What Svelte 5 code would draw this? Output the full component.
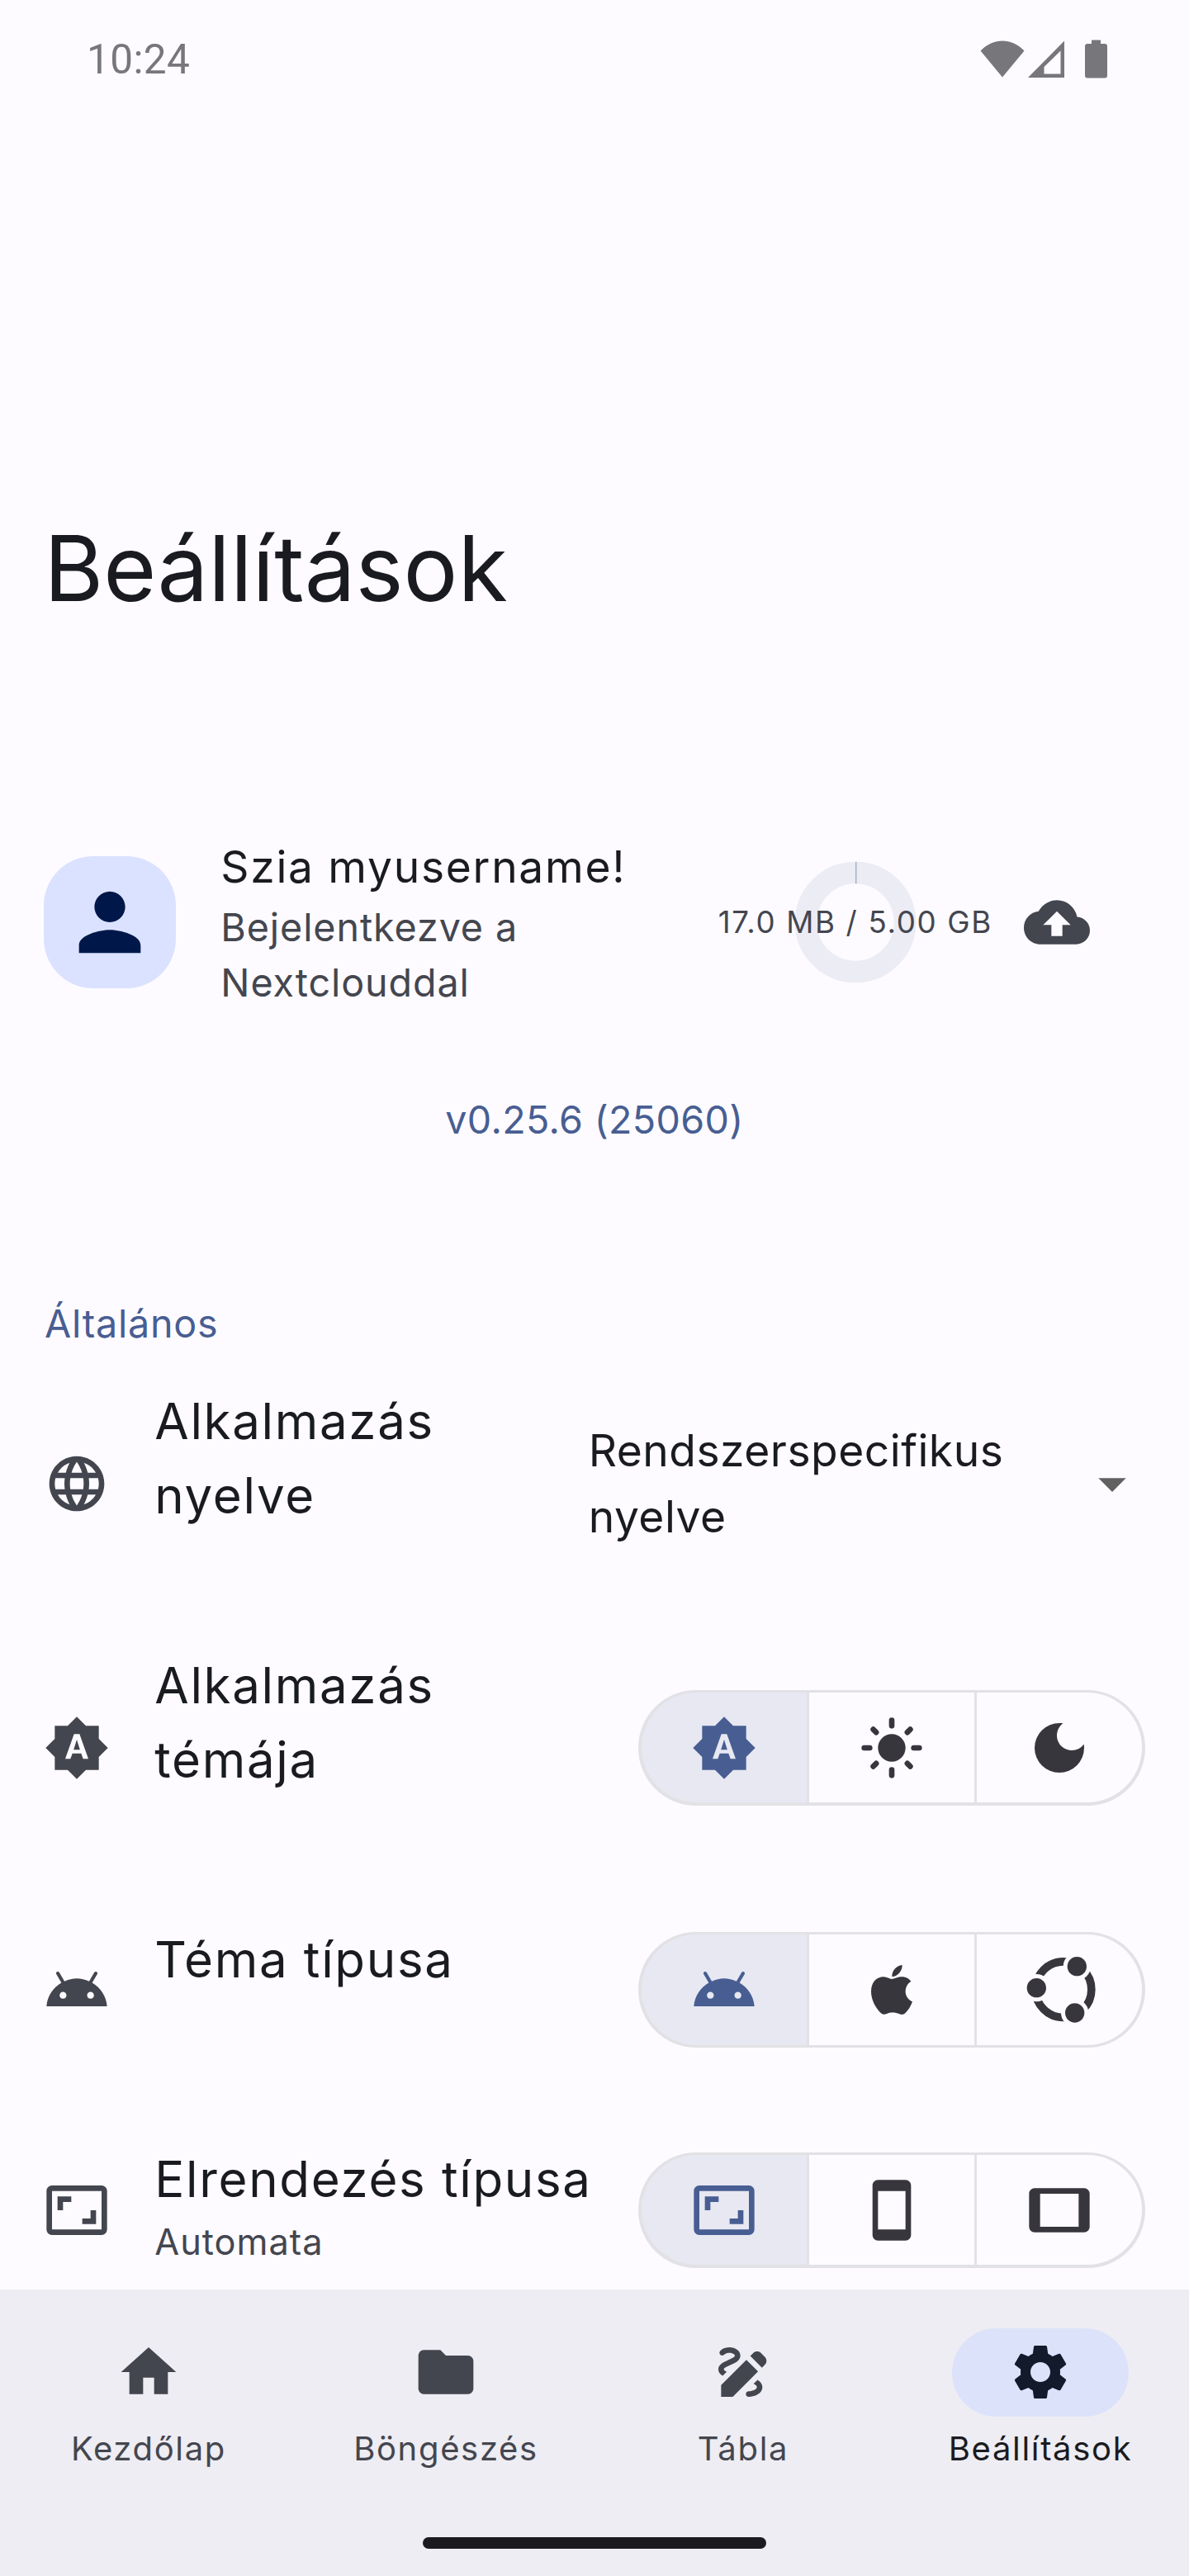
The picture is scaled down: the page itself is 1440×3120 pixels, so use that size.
<script>
  const settings = [
    {
      title: 'Alkalmazás nyelve',
      icon: 'language',
      tall: true,
      dropdown: 'Rendszerspecifikus nyelve',
    },
    {
      title: 'Alkalmazás témája',
      icon: 'autoTheme',
      tall: true,
      options: ['autoTheme', 'light', 'dark'],
    },
    { title: 'Téma típusa', icon: 'android', options: ['android', 'apple', 'ubuntu'] },
    {
      title: 'Elrendezés típusa',
      subtitle: 'Automata',
      icon: 'aspect',
      options: ['aspect', 'phone', 'tablet'],
    },
  ];

  const tabs = [
    { label: 'Kezdőlap', icon: 'home' },
    { label: 'Böngészés', icon: 'folder' },
    { label: 'Tábla', icon: 'draw' },
    { label: 'Beállítások', icon: 'gear', active: true },
  ];

  const paths = {
    person: 'M12 12c2.21 0 4-1.79 4-4s-1.79-4-4-4-4 1.79-4 4 1.79 4 4 4zm0 2c-2.67 0-8 1.34-8 4v2h16v-2c0-2.66-5.33-4-8-4z',
    cloud: 'M19.35 10.04C18.67 6.59 15.64 4 12 4 9.11 4 6.6 5.64 5.35 8.04 2.34 8.36 0 10.91 0 14c0 3.31 2.69 6 6 6h13c2.76 0 5-2.24 5-5 0-2.64-2.05-4.78-4.65-4.96zM14 13v4h-4v-4H7l5-5 5 5h-3z',
    language: 'M11.99 2C6.47 2 2 6.48 2 12s4.47 10 9.99 10C17.52 22 22 17.52 22 12S17.52 2 11.99 2zm6.93 6h-2.95c-.32-1.25-.78-2.45-1.38-3.56 1.84.63 3.37 1.91 4.33 3.56zM12 4.04c.83 1.2 1.48 2.53 1.91 3.96h-3.82c.43-1.43 1.08-2.76 1.91-3.96zM4.26 14C4.1 13.36 4 12.69 4 12s.1-1.36.26-2h3.38c-.08.66-.14 1.32-.14 2s.06 1.34.14 2H4.26zm.82 2h2.95c.32 1.25.78 2.45 1.38 3.56-1.84-.63-3.37-1.9-4.33-3.56zm2.95-8H5.08c.96-1.66 2.49-2.93 4.33-3.56C8.81 5.55 8.35 6.75 8.03 8zM12 19.96c-.83-1.2-1.48-2.53-1.91-3.96h3.82c-.43 1.43-1.08 2.76-1.91 3.96zM14.34 14H9.66c-.09-.66-.16-1.32-.16-2s.07-1.35.16-2h4.68c.09.65.16 1.32.16 2s-.07 1.34-.16 2zm.25 5.56c.6-1.11 1.06-2.31 1.38-3.56h2.95c-.96 1.65-2.49 2.93-4.33 3.56zM16.36 14c.08-.66.14-1.32.14-2s-.06-1.34-.14-2h3.38c.16.64.26 1.31.26 2s-.1 1.36-.26 2h-3.38z',
    autoTheme: 'M10.85 12.65h2.3L12 9l-1.15 3.65zM20 8.69V4h-4.69L12 .69 8.69 4H4v4.69L.69 12 4 15.31V20h4.69L12 23.31 15.31 20H20v-4.69L23.31 12 20 8.69zM14.3 16l-.7-2h-3.2l-.7 2H7.8L11 7h2l3.2 9h-1.9z',
    dark: 'M12 3a9 9 0 1 0 9 9c0-.46-.04-.92-.1-1.36a5.389 5.389 0 0 1-4.4 2.26 5.403 5.403 0 0 1-3.14-9.8C12.92 3.04 12.46 3 12 3z',
    android: 'M17.6 9.48l1.84-3.18c.16-.31.04-.69-.26-.85-.29-.15-.65-.06-.83.22l-1.88 3.24C15.04 8.28 13.55 7.9 12 7.9s-3.04.38-4.47 1.01L5.65 5.67c-.19-.29-.58-.38-.87-.2-.28.18-.37.54-.22.83L6.4 9.48C3.3 11.25 1.28 14.44 1 18h22c-.28-3.56-2.3-6.75-5.4-8.52zM7 15.25c-.69 0-1.25-.56-1.25-1.25s.56-1.25 1.25-1.25S8.25 13.31 8.25 14 7.69 15.25 7 15.25zm10 0c-.69 0-1.25-.56-1.25-1.25s.56-1.25 1.25-1.25 1.25.56 1.25 1.25-.56 1.25-1.25 1.25z',
    aspect: 'M19 12h-2v3h-3v2h5v-5zM7 9h3V7H5v5h2V9zm14-6H3c-1.1 0-2 .9-2 2v14c0 1.1.9 2 2 2h18c1.1 0 2-.9 2-2V5c0-1.1-.9-2-2-2zm0 16.01H3V4.99h18v14.02z',
    phone: 'M17 1.01L7 1c-1.1 0-1.99.9-1.99 2v18c0 1.1.89 2 1.99 2h10c1.1 0 2-.9 2-2V3c0-1.1-.9-1.99-2-1.99zM17 19H7V5h10v14z',
    tablet: 'M21 4H3c-1.1 0-2 .9-2 2v12c0 1.1.9 2 2 2h18c1.1 0 2-.9 2-2V6c0-1.1-.9-2-2-2zm-2 14H5V6h14v12z',
    home: 'M10 20v-6h4v6h5v-8h3L12 3 2 12h3v8z',
    folder: 'M10 4H4c-1.1 0-1.99.9-1.99 2L2 18c0 1.1.9 2 2 2h16c1.1 0 2-.9 2-2V8c0-1.1-.9-2-2-2h-8l-2-2z',
    draw: 'M18.85 10.39l1.06-1.06c.78-.78.78-2.05 0-2.83L18.5 5.09c-.78-.78-2.05-.78-2.83 0l-1.06 1.06 4.24 4.24zm-5.66-2.83L4 16.76V21h4.24l9.19-9.19-4.24-4.25zM19 17.5c0 2.19-2.54 3.5-5 3.5-.55 0-1-.45-1-1s.45-1 1-1c1.54 0 3-.73 3-1.5 0-.47-.48-.87-1.23-1.2l1.48-1.48c1.07.63 1.75 1.47 1.75 2.68zM4.58 13.35C3.61 12.79 3 12.06 3 11c0-1.8 1.89-2.63 3.56-3.36C7.59 7.18 9 6.56 9 6c0-.41-.78-1-2-1-1.26 0-1.8.61-1.83.64-.35.41-.98.46-1.4.12-.41-.34-.49-.95-.15-1.38C3.73 4.24 4.76 3 7 3s4 1.32 4 3c0 1.87-1.93 2.72-3.64 3.47C6.42 9.88 5 10.5 5 11c0 .31.43.6 1.07.86l-1.49 1.49z',
    gear: 'M19.14 12.94c.04-.3.06-.61.06-.94 0-.32-.02-.64-.07-.94l2.03-1.58c.18-.14.23-.41.12-.61l-1.92-3.32c-.12-.22-.37-.29-.59-.22l-2.39.96c-.5-.38-1.03-.7-1.62-.94l-.36-2.54c-.04-.24-.24-.41-.48-.41h-3.84c-.24 0-.43.17-.47.41l-.36 2.54c-.59.24-1.13.57-1.62.94l-2.39-.96c-.22-.08-.47 0-.59.22L2.74 8.87c-.12.21-.08.47.12.61l2.03 1.58c-.05.3-.09.63-.09.94s.02.64.07.94l-2.03 1.58c-.18.14-.23.41-.12.61l1.92 3.32c.12.22.37.29.59.22l2.39-.96c.5.38 1.03.7 1.62.94l.36 2.54c.05.24.24.41.48.41h3.84c.24 0 .44-.17.47-.41l.36-2.54c.59-.24 1.13-.56 1.62-.94l2.39.96c.22.08.47 0 .59-.22l1.92-3.32c.12-.22.07-.47-.12-.61l-2.01-1.58zM12 15.6c-1.98 0-3.6-1.62-3.6-3.6s1.62-3.6 3.6-3.6 3.6 1.62 3.6 3.6-1.62 3.6-3.6 3.6z',
    arrow: 'M7 10l5 5 5-5z',
  };
</script>

{#snippet icon(name)}
  {#if name === 'light'}
    <svg class="icon" viewBox="0 0 24 24">
      <circle cx="12" cy="12" r="5" />
      <path class="rays" d="M12 2v2M12 20v2M2 12h2M20 12h2M5.28 5.28l1.06 1.06M17.66 17.66l1.06 1.06M5.28 18.72l1.06-1.06M17.66 6.34l1.06-1.06" />
    </svg>
  {:else if name === 'apple'}
    <svg class="icon" viewBox="0 60 240 240">
      <path d="M121 141C135 139 141 133 157 133C172 133 184 140 190 150C176 158 170 172 170 187C170 203 180 217 195 223C190 238 180 255 169 265C163 270 156 271 148 268C130 261 118 261 102 267C94 271 86 270 80 264C60 245 45 215 45 186C45 152 66 133 90 133C104 134 110 140 121 141Z" />
      <path d="M121 132C120 112 136 92 158 90C159 110 141 133 121 132Z" />
    </svg>
  {:else if name === 'ubuntu'}
    <svg class="icon" viewBox="40 60 240 240">
      <mask id="ring-gaps" maskUnits="userSpaceOnUse" x="20" y="40" width="300" height="280">
        <rect x="20" y="40" width="300" height="280" fill="#fff" />
        <circle cx="224" cy="95" r="50" fill="#000" />
        <circle cx="77" cy="173" r="50" fill="#000" />
        <circle cx="216" cy="264" r="50" fill="#000" />
      </mask>
      <circle class="ring" cx="175" cy="179" r="101.5" mask="url(#ring-gaps)" />
      <circle cx="224" cy="95" r="35" />
      <circle cx="77" cy="173" r="35" />
      <circle cx="216" cy="264" r="35" />
    </svg>
  {:else}
    <svg class="icon" viewBox="0 0 24 24"><path d={paths[name]} /></svg>
  {/if}
{/snippet}

<div class="screen">
  <main>
    <div class="status">
      <span>10:24</span>
      <svg viewBox="0 0 156 48">
        <path d="M0.5 13.5C16 -2.5 38 -2.5 53.5 13.5L27 45.5Z" />
        <path fill-rule="evenodd" d="M102 1.5V46H58ZM97.5 13.5L77.5 33V41.5H97.5Z" />
        <path d="M135 .5h11V5h5q3 0 3 3v35.500q0 3-3 3h-21q-3 0-3-3V8q0-3 3-3h5z" />
      </svg>
    </div>

    <h1>Beállítások</h1>

    <section class="account">
      <div class="avatar">{@render icon('person')}</div>
      <div class="who">
        <div class="hello">Szia myusername!</div>
        <div class="login">Bejelentkezve a Nextclouddal</div>
      </div>
      <div class="quota">
        <svg viewBox="0 0 148 148">
          <circle class="track" cx="74" cy="74" r="60" />
          <path class="used" d="M74.700 .7v26.600" />
        </svg>
        <span>17.0 MB / 5.00 GB</span>
      </div>
      <div class="upload">{@render icon('cloud')}</div>
    </section>

    <div class="version">v0.25.6 (25060)</div>

    <h2>Általános</h2>

    {#each settings as item}
      <div class="row" class:tall={item.tall}>
        {@render icon(item.icon)}
        <div class="text" class:narrow={item.dropdown}>
          <div class="title">{item.title}</div>
          <div class="subtitle">{item.subtitle ?? ''}</div>
        </div>
        {#if item.dropdown}
          <div class="dropdown">
            <span>{item.dropdown}</span>
            {@render icon('arrow')}
          </div>
        {:else}
          <div class="segments">
            {#each item.options as option, i}
              <div class="segment" class:selected={i === 0}>{@render icon(option)}</div>
            {/each}
          </div>
        {/if}
      </div>
    {/each}
  </main>

  <nav>
    <div class="tabs">
      {#each tabs as tab}
        <div class="tab" class:active={tab.active}>
          <div class="pill">{@render icon(tab.icon)}</div>
          <div class="label">{tab.label}</div>
        </div>
      {/each}
    </div>
    <div class="handle"></div>
  </nav>
</div>

<style>
  :global(body) {
    margin: 0;
    background: #fdfbff;
  }

  .screen {
    width: 1440px;
    height: 3120px;
    overflow: hidden;
    display: flex;
    flex-direction: column;
    background: #fdfbff;
    color: #1a1b20;
    font-family: Inter, 'Noto Sans', sans-serif;
  }

  main {
    height: 2773.33px;
    flex: none;
    overflow: hidden;
  }

  .icon {
    display: block;
    flex: none;
    width: 80px;
    height: 80px;
    fill: currentColor;
    overflow: visible;
  }

  .rays {
    fill: none;
    stroke: currentColor;
    stroke-width: 2;
    stroke-linecap: round;
  }

  .ring {
    fill: none;
    stroke: currentColor;
    stroke-width: 29;
  }

  .status {
    height: 144px;
    padding: 0 97px 0 105px;
    display: flex;
    align-items: center;
    justify-content: space-between;
    color: #77767b;
    font: 49.5px/60px Roboto, sans-serif;
    letter-spacing: 0.4px;
  }

  .status svg {
    width: 156px;
    height: 48px;
    fill: currentColor;
  }

  h1 {
    margin: 474px 0 0;
    padding-left: 53.33px;
    font-size: 110px;
    line-height: 140px;
    font-weight: 400;
  }

  .account {
    height: 240px;
    margin-top: 239px;
    padding: 0 120px 0 53.33px;
    display: flex;
    align-items: center;
  }

  .avatar {
    width: 160px;
    height: 160px;
    border-radius: 60px;
    display: flex;
    align-items: center;
    justify-content: center;
    background: #dbe2ff;
    color: #001849;
  }

  .avatar .icon {
    width: 112px;
    height: 112px;
  }

  .who {
    flex: 1;
    padding-left: 54px;
  }

  .hello {
    font-size: 53.33px;
    line-height: 80px;
    letter-spacing: 1.7px;
  }

  .login {
    color: #44464f;
    font-size: 46.67px;
    line-height: 66.67px;
    letter-spacing: 0.9px;
  }

  .quota {
    display: grid;
    align-items: center;
    justify-items: center;
    color: #44464f;
    font-size: 36.67px;
    line-height: 48px;
    letter-spacing: 1.67px;
    white-space: nowrap;
  }

  .quota > * {
    grid-area: 1 / 1;
  }

  .quota svg {
    width: 148px;
    height: 148px;
  }

  .track {
    fill: none;
    stroke: #ebecf4;
    stroke-width: 26.67;
  }

  .used {
    stroke: #a3aecb;
    stroke-width: 1.4;
  }

  .upload {
    margin-left: 38px;
    color: #44464f;
  }

  .version {
    margin-top: 85.6px;
    text-align: center;
    color: #485e92;
    font-size: 46.67px;
    line-height: 66.67px;
    letter-spacing: 0.33px;
  }

  h2 {
    margin: 180.8px 0 0;
    padding-left: 54px;
    color: #485e92;
    font-size: 46.67px;
    line-height: 66.67px;
    font-weight: 400;
    letter-spacing: 0.76px;
  }

  .row {
    height: 266.67px;
    padding: 0 53.33px;
    display: flex;
    align-items: center;
    color: #44464f;
  }

  .row.tall {
    height: 320px;
  }

  .text {
    width: 540px;
    min-height: 165px;
    margin-left: 54px;
  }

  .text.narrow {
    width: auto;
    flex: 1;
  }

  .title {
    color: #1a1b20;
    font-size: 60px;
    line-height: 90px;
    letter-spacing: 1.67px;
  }

  .subtitle {
    height: 62px;
    font-size: 43.33px;
    line-height: 62px;
    letter-spacing: 1px;
  }

  .dropdown {
    width: 674px;
    margin-left: auto;
    flex: none;
    display: flex;
    align-items: center;
    color: #616161;
  }

  .dropdown span {
    flex: 1;
    color: #1a1b20;
    font-size: 53.33px;
    line-height: 80px;
    letter-spacing: 0.5px;
  }

  .segments {
    box-sizing: border-box;
    width: 613.33px;
    height: 140px;
    margin-left: auto;
    padding: 3.33px;
    border-radius: 70px;
    display: grid;
    grid-template-columns: repeat(3, 1fr);
    gap: 3px;
    background: #e2e1e5;
  }

  .segment {
    display: flex;
    align-items: center;
    justify-content: center;
    background: #fdfbff;
    color: #38363d;
  }

  .segment:first-child {
    border-radius: 67px 0 0 67px;
  }

  .segment:last-child {
    border-radius: 0 67px 67px 0;
  }

  .segment.selected {
    background: #e7e8f2;
    color: #485e92;
  }

  nav {
    flex: 1;
    display: flex;
    flex-direction: column;
    align-items: center;
    background: #eeedf3;
  }

  .tabs {
    width: 100%;
    padding-top: 46.67px;
    display: grid;
    grid-template-columns: repeat(4, 1fr);
    justify-items: center;
  }

  .tab {
    display: flex;
    flex-direction: column;
    align-items: center;
    color: #44464f;
  }

  .pill {
    width: 213.33px;
    height: 106.67px;
    border-radius: 54px;
    display: flex;
    align-items: center;
    justify-content: center;
  }

  .label {
    margin-top: 12px;
    font-size: 40px;
    line-height: 53.33px;
    letter-spacing: 1.67px;
  }

  .tab.active .pill {
    background: #dce2fa;
    color: #131a2c;
  }

  .tab.active .label {
    color: #1a1b20;
  }

  .handle {
    width: 416px;
    height: 13.33px;
    margin-top: 81.3px;
    border-radius: 7px;
    background: #1b1b1f;
  }
</style>
